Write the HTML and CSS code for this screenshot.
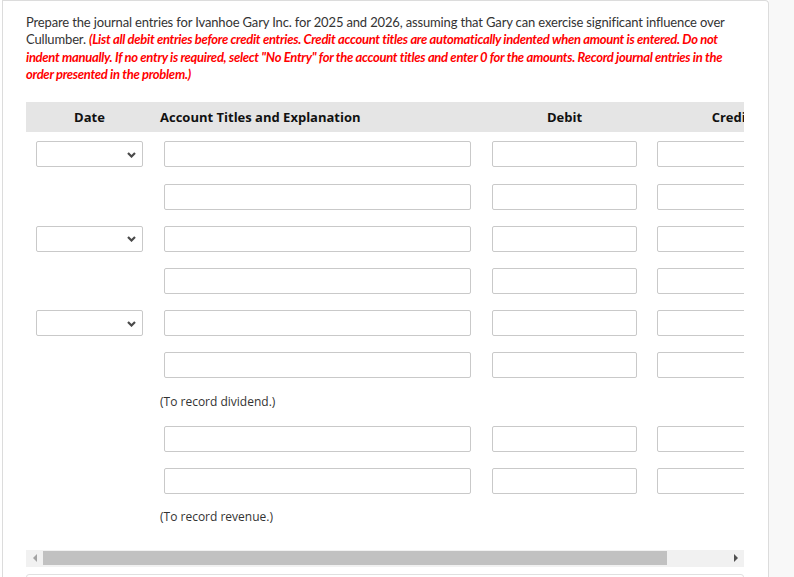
FILE: index.html
```html
<!DOCTYPE html>
<html>
<head>
<meta charset="utf-8">
<link rel="stylesheet" href="styles.css">
</head>
<body>
<div class="page">
  <div class="card">
    <p class="prompt">Prepare the journal entries for Ivanhoe Gary Inc. for 2025 and 2026, assuming that Gary can exercise significant influence over Cullumber. <em class="note">(List all debit entries before credit entries. Credit account titles are automatically indented when amount is entered. Do not indent manually. If no entry is required, select "No Entry" for the account titles and enter 0 for the amounts. Record journal entries in the order presented in the problem.)</em></p>

    <div class="table-wrap">
      <div class="table-view">
        <div class="table">
          <div class="row head">
            <div class="cell date">Date</div>
            <div class="cell acct">Account Titles and Explanation</div>
            <div class="cell amt">Debit</div>
            <div class="cell amt">Credit</div>
          </div>

          <div class="row">
            <div class="cell date"><div class="select"><svg class="chev" width="9" height="6" viewBox="0 0 9 6"><path d="M1 1 L4.5 4.5 L8 1" fill="none" stroke="#4a4a4a" stroke-width="2.2"/></svg></div></div>
            <div class="cell acct"><div class="input acct-in"></div></div>
            <div class="cell amt"><div class="input debit-in"></div></div>
            <div class="cell amt cr"><div class="input credit-in"></div></div>
          </div>
          <div class="row">
            <div class="cell date"></div>
            <div class="cell acct"><div class="input acct-in"></div></div>
            <div class="cell amt"><div class="input debit-in"></div></div>
            <div class="cell amt cr"><div class="input credit-in"></div></div>
          </div>

          <div class="row">
            <div class="cell date"><div class="select"><svg class="chev" width="9" height="6" viewBox="0 0 9 6"><path d="M1 1 L4.5 4.5 L8 1" fill="none" stroke="#4a4a4a" stroke-width="2.2"/></svg></div></div>
            <div class="cell acct"><div class="input acct-in"></div></div>
            <div class="cell amt"><div class="input debit-in"></div></div>
            <div class="cell amt cr"><div class="input credit-in"></div></div>
          </div>
          <div class="row">
            <div class="cell date"></div>
            <div class="cell acct"><div class="input acct-in"></div></div>
            <div class="cell amt"><div class="input debit-in"></div></div>
            <div class="cell amt cr"><div class="input credit-in"></div></div>
          </div>

          <div class="row">
            <div class="cell date"><div class="select"><svg class="chev" width="9" height="6" viewBox="0 0 9 6"><path d="M1 1 L4.5 4.5 L8 1" fill="none" stroke="#4a4a4a" stroke-width="2.2"/></svg></div></div>
            <div class="cell acct"><div class="input acct-in"></div></div>
            <div class="cell amt"><div class="input debit-in"></div></div>
            <div class="cell amt cr"><div class="input credit-in"></div></div>
          </div>
          <div class="row">
            <div class="cell date"></div>
            <div class="cell acct"><div class="input acct-in"></div></div>
            <div class="cell amt"><div class="input debit-in"></div></div>
            <div class="cell amt cr"><div class="input credit-in"></div></div>
          </div>
          <div class="row expl">
            <div class="cell date"></div>
            <div class="cell acct text">(To record dividend.)</div>
            <div class="cell amt"></div>
            <div class="cell amt"></div>
          </div>

          <div class="row">
            <div class="cell date"></div>
            <div class="cell acct"><div class="input acct-in"></div></div>
            <div class="cell amt"><div class="input debit-in"></div></div>
            <div class="cell amt cr"><div class="input credit-in"></div></div>
          </div>
          <div class="row">
            <div class="cell date"></div>
            <div class="cell acct"><div class="input acct-in"></div></div>
            <div class="cell amt"><div class="input debit-in"></div></div>
            <div class="cell amt cr"><div class="input credit-in"></div></div>
          </div>
          <div class="row expl">
            <div class="cell date"></div>
            <div class="cell acct text">(To record revenue.)</div>
            <div class="cell amt"></div>
            <div class="cell amt"></div>
          </div>
        </div>
      </div>

      <div class="scrollbar">
        <div class="sb-btn"><span class="tri-left"></span></div>
        <div class="sb-track"><div class="sb-thumb"></div></div>
        <div class="sb-btn"><span class="tri-right"></span></div>
      </div>
    </div>

    <div class="next-box"></div>
  </div>
</div>
</body>
</html>
```

FILE: styles.css
```css
html, body {
  margin: 0;
  padding: 0;
}
body {
  background: #f8f8f8;
  font-family: Lato, "Open Sans", sans-serif;
  color: #333;
  overflow: hidden;
}
.page {
  width: 767px;
  padding-left: 2px;
  background: #fff;
  min-height: 577px;
}
.card {
  box-sizing: border-box;
  width: 767px;
  min-height: 600px;
  background: #fff;
  border: 1px solid #dcdcdc;
  border-bottom: none;
  border-top-right-radius: 4px;
  padding: 13px 24px 0 23px;
}
.prompt {
  margin: 0;
  font-size: 13px;
  line-height: 17.33px;
  letter-spacing: -0.15px;
  color: #333;
}
.note {
  color: #f00;
  font-weight: bold;
  font-style: italic;
  letter-spacing: -0.3px;
}
.table-wrap {
  margin-top: 19px;
  width: 718px;
}
.table-view {
  overflow: hidden;
  width: 718px;
}
.table {
  width: 789px;
}
.row {
  display: grid;
  grid-template-columns: 127px 328px 166px 168px;
  height: 42.2px;
  align-items: center;
}
.row.head {
  height: 30px;
  background: #e5e5e5;
  font-family: "Open Sans", sans-serif;
  font-weight: bold;
  font-size: 13px;
  color: #111;
  margin-bottom: 1px;
}
.row.expl {
  height: 31px;
  padding-bottom: 1px;
  box-sizing: border-box;
}
.cell {
  box-sizing: border-box;
  display: flex;
  align-items: center;
}
.cell.date {
  justify-content: center;
}
.cell.acct {
  padding-left: 11px;
}
.head .cell.acct,
.cell.acct.text {
  padding-left: 7px;
}
.cell.amt {
  justify-content: center;
  padding-left: 1px;
}
.cell.amt.cr {
  padding-left: 0;
}
.cell.text {
  font-family: "Open Sans", sans-serif;
  font-size: 12px;
  color: #333;
}
.input, .select {
  box-sizing: border-box;
  height: 26px;
  border: 1px solid #c9c9c9;
  border-radius: 2px;
  background: #fff;
}
.select {
  width: 107px;
  display: flex;
  align-items: center;
  justify-content: flex-end;
  padding-right: 6px;
  padding-top: 1px;
}
.acct-in { width: 307px; }
.debit-in { width: 145px; }
.credit-in { width: 148px; }

.scrollbar {
  margin-top: 17px;
  height: 17px;
  display: flex;
  background: #f1f1f1;
}
.sb-btn {
  width: 17px;
  display: flex;
  align-items: center;
  justify-content: center;
}
.sb-track {
  flex: 1;
  display: flex;
  align-items: center;
}
.sb-thumb {
  width: 624px;
  height: 14px;
  background: #c1c1c1;
}
.tri-left {
  width: 0;
  height: 0;
  border-top: 4px solid transparent;
  border-bottom: 4px solid transparent;
  border-right: 4px solid #a3a3a3;
}
.tri-right {
  width: 0;
  height: 0;
  border-top: 4px solid transparent;
  border-bottom: 4px solid transparent;
  border-left: 4px solid #505050;
}
.next-box {
  margin-top: 7px;
  width: 718px;
  height: 30px;
  box-sizing: border-box;
  border: 1px solid #e0e0e0;
  border-radius: 3px;
}
```
